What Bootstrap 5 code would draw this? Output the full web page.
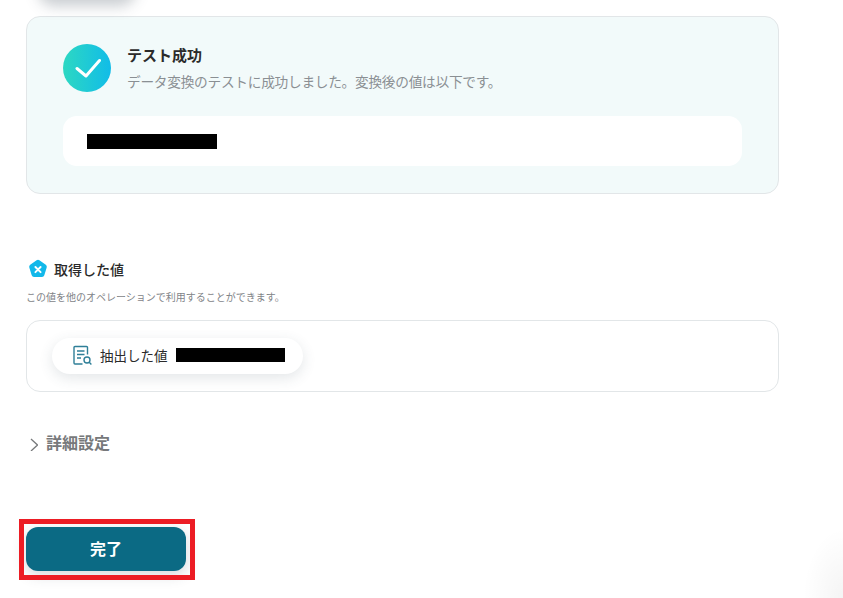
<!DOCTYPE html>
<html lang="ja">

<head>
  <meta charset="UTF-8">
  <title>テスト成功</title>
  <meta name="viewport" content="width=device-width, initial-scale=1.0" />
  <link href="https://cdn.jsdelivr.net/npm/bootstrap@5.3.0/dist/css/bootstrap.min.css" rel="stylesheet" />
  <style>
    html, body { height: 100%; overflow: hidden; }
    body {
      font-family: "Noto Sans CJK JP", "Noto Sans", sans-serif;
      color: #2b2b2b;
      background: #fff;
      position: relative;
    }
    .page-wrap { width: 779px; padding: 16px 0 0 26px; }
    .top-shadow {
      position: absolute; left: 42px; top: -40px; width: 90px; height: 40px;
      border-radius: 12px; box-shadow: 0 2px 14px 4px rgba(60, 75, 90, .28);
    }
    .corner-shadow {
      position: absolute; right: 0; bottom: 0; width: 40px; height: 70px;
      background: radial-gradient(ellipse 40px 70px at 100% 100%, rgba(0, 0, 0, .045), rgba(0, 0, 0, 0));
    }
    .result-box {
      height: 178px; padding: 27px 36px 0;
      background: #f2fafa; border: 1px solid #e2e6e8; border-radius: 14px;
    }
    .check-circle {
      width: 48px; height: 48px; border-radius: 50%; flex: none;
      background: linear-gradient(90deg, #2dd8c2, #11bce8);
    }
    .result-title { font-size: 15px; font-weight: 700; line-height: 22px; }
    .result-sub { font-size: 13.7px; line-height: 20px; margin-top: 5px; color: #8a8f93; letter-spacing: -.02em; }
    .value-box { height: 50px; margin-top: 24px; padding: 18px 24px 0; background: #fff; border-radius: 14px; }
    .mask-a { width: 130px; height: 15px; background: #000; }
    .mask-b { width: 109px; height: 14px; background: #000; }
    .heading-row { margin-top: 64px; height: 22px; padding-left: 2px; gap: 6px; }
    .heading-text { font-size: 14px; font-weight: 500; line-height: 22px; }
    .hint-text { font-size: 10px; line-height: 14px; margin-top: 10px; color: #7f8488; }
    .output-box { height: 72px; margin-top: 16px; padding: 17px 25px; border: 1px solid #e2e6e8; border-radius: 14px; }
    .output-pill {
      width: 251px; height: 36px; padding: 0 0 2px 20px; border-radius: 18px; background: #fff;
      box-shadow: 0 4px 14px rgba(60, 75, 90, .14); font-size: 13.5px;
    }
    .detail-row { margin-top: 38px; height: 24px; font-size: 16px; font-weight: 700; color: #77797b; }
    .done-btn {
      width: 160px; height: 44px; margin-top: 73px; padding: 0 0 2px;
      font-size: 16px; font-weight: 700; color: #fff; background: #0b6a84; border: 0; border-radius: 12px;
      box-shadow: 0 4px 14px rgba(60, 75, 90, .22);
    }
    .done-btn:hover { color: #fff; background: #0b6a84; }
    .red-frame {
      position: absolute; left: 19px; top: 519px; width: 176px; height: 61px;
      border: 5px solid #ec1c24;
    }
    .flex-none { flex: none; }
  </style>
</head>

<body>
  <div class="top-shadow"></div>
  <div class="corner-shadow"></div>

  <div class="page-wrap">
    <!-- 結果 -->
    <div class="result-box">
      <div class="d-flex gap-3">
        <div class="check-circle d-flex align-items-center justify-content-center">
          <svg width="28" height="20" viewBox="0 0 28 20" fill="none">
            <path d="M4 10.5 L13 18 L26.5 2.5" stroke="#fff" stroke-width="3" stroke-linecap="round" stroke-linejoin="round" />
          </svg>
        </div>
        <div>
          <div class="result-title">テスト成功</div>
          <div class="result-sub">データ変換のテストに成功しました。変換後の値は以下です。</div>
        </div>
      </div>
      <div class="value-box">
        <div class="mask-a"></div>
      </div>
    </div>

    <!-- 取得した値 -->
    <div class="heading-row d-flex align-items-center">
      <svg width="20" height="20" viewBox="0 0 20 20" class="flex-none">
        <path d="M8.6 1.2 a2.4 2.4 0 0 1 2.8 0 l6.4 4.6 a2.4 2.4 0 0 1 .9 2.7 l-2.4 7.7 a2.4 2.4 0 0 1 -2.3 1.7 h-8 a2.4 2.4 0 0 1 -2.3 -1.7 l-2.4 -7.7 a2.4 2.4 0 0 1 .9 -2.7 z" fill="#12b8ea" />
        <path d="M7.4 8 L12.6 13.2 M12.6 8 L7.4 13.2" stroke="#fff" stroke-width="1.9" stroke-linecap="round" />
      </svg>
      <span class="heading-text">取得した値</span>
    </div>
    <div class="hint-text">この値を他のオペレーションで利用することができます。</div>

    <div class="output-box">
      <div class="output-pill d-flex align-items-center">
        <svg width="20" height="20" viewBox="0 0 20 20" fill="none" stroke="#2f7f98" stroke-width="1.4" class="flex-none">
          <path d="M15.5 9.5 V2.5 a1 1 0 0 0 -1 -1 H3 a1 1 0 0 0 -1 1 V18 a1 1 0 0 0 1 1 H10.5" />
          <path d="M5 6 H12.5 M5 9.5 H12.5 M5 13 H9" />
          <circle cx="15" cy="15" r="3" />
          <path d="M17.2 17.2 L19.4 19.4" />
        </svg>
        <span class="ms-2 me-2">抽出した値</span>
        <div class="mask-b"></div>
      </div>
    </div>

    <!-- 詳細設定 -->
    <div class="detail-row d-flex align-items-center gap-2">
      <svg width="12" height="18" viewBox="0 0 12 18" fill="none" class="flex-none">
        <path d="M5 6 L11.5 12 L5 18" stroke="#77797b" stroke-width="1.3" />
      </svg>
      <span>詳細設定</span>
    </div>

    <button type="button" class="btn done-btn d-block">完了</button>
  </div>

  <div class="red-frame"></div>
</body>

</html>
